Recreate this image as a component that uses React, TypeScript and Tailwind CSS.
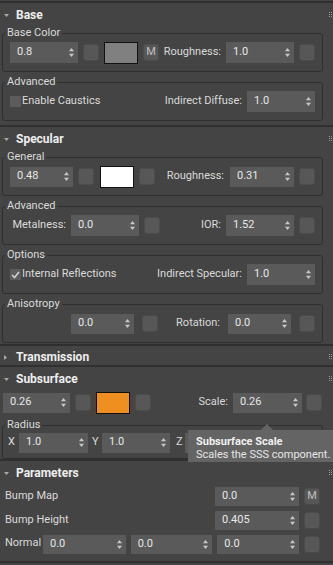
import React from 'react'

const Arrows = () => (
  <svg width="5" height="9" viewBox="0 0 5 9" className="shrink-0">
    <path d="M2.5 0 L5 3.2 L0 3.2 Z" fill="#c8c8c8" />
    <path d="M0 5.8 L5 5.8 L2.5 9 Z" fill="#c8c8c8" />
  </svg>
)

function Spin({ v, cls }: { v: string; cls: string }) {
  return (
    <div className={`flex items-center justify-between bg-[#5a5a5a] pl-[7px] pr-[4px] text-[#e8e8e8] ${cls}`}>
      <span>{v}</span>
      <Arrows />
    </div>
  )
}

function Sq({ cls = '', m = false }: { cls?: string; m?: boolean }) {
  return (
    <div className={`flex h-[17px] w-[16px] shrink-0 items-center justify-center rounded-[3px] border border-[#4c4c4c] bg-[#575757] text-[#c0c0c0] ${cls}`}>
      {m ? 'M' : null}
    </div>
  )
}

function Check({ on = false }: { on?: boolean }) {
  return (
    <div className="ml-[7px] flex h-[11px] w-[11px] shrink-0 items-center justify-center bg-[#5c5c5c]">
      {on && (
        <svg width="9" height="8" viewBox="0 0 9 8">
          <path d="M1 4 L3.5 6.5 L8 1" stroke="#d0d0d0" strokeWidth="1.6" fill="none" />
        </svg>
      )}
    </div>
  )
}

function Grip() {
  return (
    <svg width="3" height="5" viewBox="0 0 3 5" className="mb-[2px] ml-auto mr-[1px]">
      {[0, 2, 4].map(y => (
        <g key={y}>
          <rect x="0" y={y} width="1" height="1" fill="#9a9a9a" />
          <rect x="2" y={y} width="1" height="1" fill="#9a9a9a" />
        </g>
      ))}
    </svg>
  )
}

function Header({ title, open = true, tall = true }: { title: string; open?: boolean; tall?: boolean }) {
  return (
    <div className={`flex items-center pt-[3px] ${tall ? 'h-[21px]' : 'h-[19px]'}`}>
      <div className="flex w-[16px] justify-start pl-[4px]">
        {open ? (
          <svg width="5" height="3" viewBox="0 0 5 3"><path d="M0 0 L5 0 L2.5 3 Z" fill="#a8a8a8" /></svg>
        ) : (
          <svg width="3" height="5" viewBox="0 0 3 5"><path d="M0 0 L3 2.5 L0 5 Z" fill="#a8a8a8" /></svg>
        )}
      </div>
      <span className="text-[12px] font-bold text-[#eeeeee]">{title}</span>
      <Grip />
    </div>
  )
}

const Divider = () => <div className="h-[2px] bg-[#303030]" />

function Group({ title, children, pb = 'pb-[8px]', pt = 'pt-[2px]', mt = 'mt-[3px]' }: { title: string; children: React.ReactNode; pb?: string; pt?: string; mt?: string }) {
  return (
    <fieldset className={`mx-[2px] w-[321px] rounded-[3px] border border-[#2f2f2f] px-0 ${pt} ${pb} ${mt}`}>
      <legend className="ml-[2px] px-[2px] leading-[14px] text-[#dadada]">{title}</legend>
      {children}
    </fieldset>
  )
}

export default function App() {
  return (
    <div className="relative h-[565px] w-[333px] overflow-hidden bg-[#444444] font-['Roboto',sans-serif] text-[11px] text-[#dadada]">
      <div className="h-[3px] border-b-2 border-[#303030]" />

      {/* Base */}
      <Header title="Base" />
      <Group title="Base Color" mt="mt-[2px]">
        <div className="flex h-[21px] items-center pr-[7px]">
          <Spin v="0.8" cls="ml-[7px] h-[21px] w-[68px]" />
          <Sq cls="ml-[5px]" />
          <div className="ml-[5px] h-[22px] w-[34px] shrink-0 border border-[#111] bg-[#808080]" />
          <Sq cls="ml-[5px]" m />
          <span className="mr-[5px] flex-1 text-right">Roughness:</span>
          <Spin v="1.0" cls="h-[21px] w-[68px]" />
          <Sq cls="ml-[5px]" />
        </div>
      </Group>
      <Group title="Advanced">
        <div className="flex h-[21px] items-center pr-[7px]">
          <Check />
          <span className="ml-[1px]">Enable Caustics</span>
          <span className="mr-[5px] flex-1 text-right">Indirect Diffuse:</span>
          <Spin v="1.0" cls="h-[21px] w-[68px]" />
        </div>
      </Group>
      <div className="h-[4px]" />
      <Divider />

      {/* Specular */}
      <Header title="Specular" />
      <Group title="General" mt="mt-[2px]">
        <div className="flex h-[21px] items-center pr-[7px]">
          <Spin v="0.48" cls="ml-[7px] h-[20px] w-[63px]" />
          <Sq cls="ml-[5px]" />
          <div className="ml-[6px] h-[22px] w-[34px] shrink-0 border border-[#111] bg-white" />
          <Sq cls="ml-[5px]" />
          <span className="mr-[6px] flex-1 text-right">Roughness:</span>
          <Spin v="0.31" cls="h-[20px] w-[64px]" />
          <Sq cls="ml-[5px]" />
        </div>
      </Group>
      <Group title="Advanced">
        <div className="flex h-[21px] items-center pr-[7px]">
          <span className="w-[63px] shrink-0 text-right">Metalness:</span>
          <Spin v="0.0" cls="ml-[5px] h-[21px] w-[68px]" />
          <Sq cls="ml-[5px]" />
          <span className="mr-[5px] flex-1 text-right">IOR:</span>
          <Spin v="1.52" cls="h-[21px] w-[68px]" />
          <Sq cls="ml-[5px]" />
        </div>
      </Group>
      <Group title="Options">
        <div className="flex h-[21px] items-center pr-[7px]">
          <Check on />
          <span className="ml-[1px]">Internal Reflections</span>
          <span className="mr-[5px] flex-1 text-right">Indirect Specular:</span>
          <Spin v="1.0" cls="h-[21px] w-[68px]" />
        </div>
      </Group>
      <Group title="Anisotropy">
        <div className="flex h-[21px] items-center pr-[7px]">
          <Spin v="0.0" cls="ml-[68px] h-[20px] w-[63px]" />
          <Sq cls="ml-[8px]" />
          <span className="mr-[8px] flex-1 text-right">Rotation:</span>
          <Spin v="0.0" cls="h-[20px] w-[63px]" />
          <Sq cls="ml-[8px]" />
        </div>
      </Group>
      <div className="h-[1px]" />
      <Divider />

      {/* Transmission */}
      <Header title="Transmission" open={false} tall={false} />
      <Divider />

      {/* Subsurface */}
      <Header title="Subsurface" />
      <div className="mt-[4px] flex h-[21px] items-center pr-[11px]">
        <Spin v="0.26" cls="ml-[3px] h-[20px] w-[67px]" />
        <Sq cls="ml-[5px]" />
        <div className="ml-[5px] h-[22px] w-[34px] shrink-0 border border-[#111] bg-[#ee8f1f]" />
        <Sq cls="ml-[5px]" />
        <span className="mr-[5px] flex-1 text-right">Scale:</span>
        <Spin v="0.26" cls="h-[20px] w-[69px]" />
        <Sq cls="ml-[4px]" />
      </div>
      <Group title="Radius" mt="mt-[5px]" pt="pt-0" pb="pb-[5px]">
        <div className="flex h-[21px] items-center pr-[7px]">
          <span className="ml-[5px] w-[11px] shrink-0">X</span>
          <Spin v="1.0" cls="h-[20px] w-[69px]" />
          <span className="ml-[4px] w-[10px] shrink-0">Y</span>
          <Spin v="1.0" cls="h-[20px] w-[68px]" />
          <span className="ml-[6px] w-[9px] shrink-0">Z</span>
          <Spin v="" cls="h-[20px] w-[69px]" />
          <Sq cls="ml-[5px]" />
        </div>
      </Group>
      <Divider />

      {/* Parameters */}
      <Header title="Parameters" />
      <div className="mt-[5px] flex flex-col gap-[5px]">
        <div className="flex h-[19px] items-center pl-[5px] pr-[13px]">
          <span className="flex-1">Bump Map</span>
          <Spin v="0.0" cls="h-[19px] w-[84px]" />
          <Sq cls="ml-[5px] w-[15px]" m />
        </div>
        <div className="flex h-[19px] items-center pl-[5px] pr-[13px]">
          <span className="flex-1">Bump Height</span>
          <Spin v="0.405" cls="h-[19px] w-[84px]" />
          <Sq cls="ml-[5px] w-[15px]" />
        </div>
        <div className="flex h-[19px] items-center pl-[5px] pr-[13px]">
          <span className="mb-[3px] w-[38px] shrink-0">Normal</span>
          <Spin v="0.0" cls="h-[19px] w-[83px]" />
          <Spin v="0.0" cls="ml-[5px] h-[19px] w-[82px]" />
          <Spin v="0.0" cls="ml-[5px] h-[19px] w-[82px]" />
          <Sq cls="ml-[5px] w-[15px]" />
        </div>
      </div>
      <div className="mt-[7px]">
        <Divider />
      </div>

      {/* tooltip over the Radius group */}
      <div className="absolute left-[188px] top-[424px] w-[150px]">
        <svg width="150" height="6" viewBox="0 0 150 6" className="block">
          <path d="M73 6 L79 0 L85 6 Z" fill="#646464" />
        </svg>
        <div className="h-[32px] bg-[#646464] pl-[8px] pt-[5px] leading-[13px] text-[#e6e6e6]">
          <div className="font-bold text-[#f0f0f0]">Subsurface Scale</div>
          <div>Scales the SSS component.</div>
        </div>
      </div>
    </div>
  )
}
